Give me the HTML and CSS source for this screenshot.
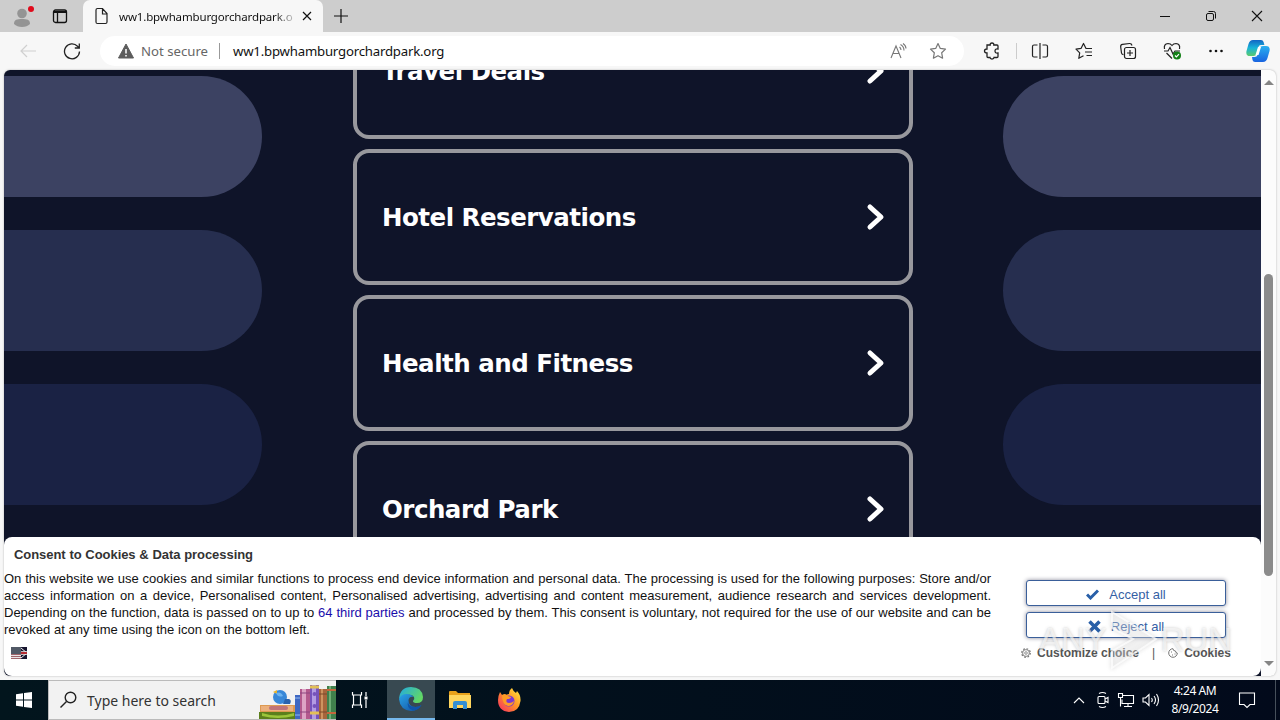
FILE: index.html
```html
<!DOCTYPE html>
<html lang="en">
<head>
    <meta charset="UTF-8">
    <meta name="viewport" content="width=device-width, initial-scale=1.0">
    <title>ww1.bpwhamburgorchardpark.org</title>
    <link rel="stylesheet" href="styles.css">
</head>
<body>
    <div class="tabbar">
        <div class="tab-tools">
            <svg class="profile" width="24" height="24" viewBox="0 0 24 24"><circle cx="12" cy="8.500" r="4.800" fill="#949494"/><path d="M4 19c0-4.500 3-5 8-5s8 .5 8 5q-3 3-8 3t-8-3z" fill="#949494"/><circle cx="21" cy="4" r="3" fill="#e00b1c"/></svg>
            <svg width="16" height="16" viewBox="0 0 16 16" fill="none" stroke="#111" stroke-width="1.3"><rect x="1.500" y="2" width="13" height="12.500" rx="2"/><path d="M2 4h12" stroke-width="2"/><path d="M5.500 5v9"/></svg>
        </div>
        <div class="tab">
            <svg width="14" height="18" viewBox="0 0 14 18" fill="none" stroke="#222" stroke-width="1.2"><path d="M2.500 1.500h5l4.500 5V15q0 1.500-1.500 1.500h-8Q1 16.500 1 15V3q0-1.500 1.500-1.500zM7.500 1.500V7H12"/></svg>
            <span class="tab-title">ww1.bpwhamburgorchardpark.o</span>
            <svg width="10" height="10" viewBox="0 0 10 10" stroke="#111" stroke-width="1.2"><path d="M1 1l8 8M9 1L1 9"/></svg>
        </div>
        <svg class="new-tab" width="16" height="16" viewBox="0 0 16 16" stroke="#111" stroke-width="1.2"><path d="M1 8h14M8 1v14"/></svg>
        <div class="window-buttons">
            <svg width="12" height="12" viewBox="0 0 12 12" stroke="#111"><path d="M1 6.500h10"/></svg>
            <svg width="12" height="12" viewBox="0 0 12 12" fill="none" stroke="#111"><rect x="1.500" y="3.500" width="7" height="7" rx="1.500"/><path d="M3.500 1.500h5q2 0 2 2v5"/></svg>
            <svg width="12" height="12" viewBox="0 0 12 12" stroke="#111" stroke-width="1.100"><path d="M1 1l10 10M11 1L1 11"/></svg>
        </div>
    </div>

    <div class="toolbar">
        <svg class="back" width="18" height="18" viewBox="0 0 18 18" fill="none" stroke="#d0d0d0" stroke-width="1.200"><path d="M17 9H2M8 3L2 9l6 6"/></svg>
        <svg class="reload" width="18" height="18" viewBox="0 0 18 18" fill="none" stroke="#222" stroke-width="1.300"><path d="M16.500 9.500A7.500 7.500 0 1 1 14.500 4.200L16 6M16.300 1.500V6h-4.500"/></svg>
        <div class="address">
            <svg width="16" height="16" viewBox="0 0 16 16"><path d="M8 1l7.500 14H.5z" fill="#5c5c5c" stroke="#5c5c5c" stroke-linejoin="round"/><path d="M8 6v4.500M8 12v1.600" stroke="#fff" stroke-width="1.500"/></svg>
            <span class="not-secure">Not secure</span>
            <span class="address-line"></span>
            <span class="url">ww1.bpwhamburgorchardpark.org</span>
            <svg class="read-aloud" width="17" height="16" viewBox="0 0 17 16" fill="none" stroke="#777" stroke-width="1.100"><path d="M1 15L6 3l5 12M2.800 10.500h6.400M9.500 4q1.500 1.200 1.500 3M10.500 1.500q3.500 2 3.500 6M13 .5q3 2 3 5"/></svg>
            <svg width="18" height="18" viewBox="0 0 18 18" fill="none" stroke="#777" stroke-width="1.200" stroke-linejoin="round"><path d="M9 1.500l2.300 4.900 5.200.7-3.800 3.700.9 5.400L9 13.700l-4.600 2.500.9-5.400L1.500 7.100l5.200-.7z"/></svg>
        </div>
        <div class="tool-icons">
            <svg width="18" height="18" viewBox="0 0 18 18" fill="none" stroke="#222" stroke-width="1.300"><path d="M4 3h3.200q-.2-2 1.800-2t1.800 2H14q1 0 1 1v3q-3-.5-3 2t3 2v3.500q0 1-1 1h-3q0 1.500-2 1.500t-2-1.500H5q-1 0-1-1V11Q1.500 11 1.500 9T4 7z"/></svg>
            <span class="tool-line"></span>
            <svg width="18" height="18" viewBox="0 0 18 18" fill="none" stroke="#222" stroke-width="1.200"><path d="M9 1v16M6.500 3H3Q1.500 3 1.500 4.500v9Q1.500 15 3 15h3.500M11.500 3H15q1.500 0 1.500 1.500v9Q16.500 15 15 15h-3.500"/></svg>
            <svg width="18" height="18" viewBox="0 0 18 18" fill="none" stroke="#222" stroke-width="1.200" stroke-linejoin="round"><path d="M17 6.500h-6L8.500 1.500 6 6.400l-5 .7 3.700 3.700-.9 5.500 4.700-2.500M10 10h7M11.500 13.500H17"/></svg>
            <svg width="18" height="18" viewBox="0 0 18 18" fill="none" stroke="#222" stroke-width="1.200"><rect x="5.500" y="5.500" width="11" height="11" rx="2"/><path d="M11 8v6M8 11h6M13 3.500Q12.500 1.300 10.500 1.500l-7 .9Q1.400 2.700 1.700 5l.8 6q.2 1.500 2 1.700"/></svg>
            <svg width="18" height="18" viewBox="0 0 18 18" fill="none" stroke="#222" stroke-width="1.200"><path d="M1.500 7Q.5 2 5 1.500q2.500 0 4 2 1.500-2 4-2Q17.500 2 16.500 7M3.500 11l5.500 5.500M1 9h4l2-3.500L10 12l2-3h5"/><circle cx="14" cy="13.500" r="4" fill="#138017" stroke="none"/><path d="M12 13.500l1.400 1.400 2.600-2.700" stroke="#fff"/></svg>
            <svg width="18" height="18" viewBox="0 0 18 18" fill="#111"><circle cx="3.500" cy="9" r="1.300"/><circle cx="9" cy="9" r="1.300"/><circle cx="14.500" cy="9" r="1.300"/></svg>
        </div>
        <svg class="copilot" width="24" height="24" viewBox="0 0 24 24">
            <defs>
                <linearGradient id="cpLeft" x1="0" y1="0" x2="0" y2="1"><stop offset="0" stop-color="#1265c4"/><stop offset=".5" stop-color="#18b4d8"/><stop offset="1" stop-color="#5ccb6c"/></linearGradient>
                <linearGradient id="cpRight" x1="0" y1="0" x2="0" y2="1"><stop offset="0" stop-color="#29b0f0"/><stop offset="1" stop-color="#1964e0"/></linearGradient>
            </defs>
            <path d="M7 1h8q2 0 2.600 2l.8 3H15q-2 0-2.600 2l-2 7Q9.800 17 7.500 17H4Q-.5 17 .5 12l2-7Q3.700 1 7 1z" fill="url(#cpLeft)"/>
            <path d="M17 7h3q4.500 0 3.500 5l-2 7q-1.200 4-4.500 4H9q-2 0-2.500-2L6 18h2.500q2.500 0 3-2l2.200-7Q14.300 7 17 7z" fill="url(#cpRight)"/>
            <path d="M12 8h3l-2.500 8H9.500z" fill="#fff"/>
        </svg>
    </div>

    <div class="browser">
        <div class="page">
            <div class="pills pills-left">
                <span class="pill pill-light"></span>
                <span class="pill pill-mid"></span>
                <span class="pill pill-dark"></span>
            </div>
            <div class="cards">
                <a class="card"><span>Travel Deals</span><svg width="20" height="28" viewBox="0 0 20 28"><path d="M4 4l11 10L4 24"/></svg></a>
                <a class="card"><span>Hotel Reservations</span><svg width="20" height="28" viewBox="0 0 20 28"><path d="M4 4l11 10L4 24"/></svg></a>
                <a class="card"><span>Health and Fitness</span><svg width="20" height="28" viewBox="0 0 20 28"><path d="M4 4l11 10L4 24"/></svg></a>
                <a class="card"><span>Orchard Park</span><svg width="20" height="28" viewBox="0 0 20 28"><path d="M4 4l11 10L4 24"/></svg></a>
            </div>
            <div class="pills pills-right">
                <span class="pill pill-light"></span>
                <span class="pill pill-mid"></span>
                <span class="pill pill-dark"></span>
            </div>

            <div class="consent">
                <div class="consent-text">
                    <h2>Consent to Cookies &amp; Data processing</h2>
                    <p>
                        <span class="line">On this website we use cookies and similar functions to process end device information and personal data. The processing is used for the following purposes: Store and/or</span>
                        <span class="line">access information on a device, Personalised content, Personalised advertising, advertising and content measurement, audience research and services development.</span>
                        <span class="line">Depending on the function, data is passed on to up to <a>64 third parties</a> and processed by them. This consent is voluntary, not required for the use of our website and can be</span>
                        <span class="line last">revoked at any time using the icon on the bottom left.</span>
                    </p>
                    <svg class="flag" width="16" height="12" viewBox="0 0 16 12">
                        <rect width="16" height="12" fill="#e9e4e6"/>
                        <path d="M0 7.500h10M0 9.500h10M0 11.500h10" stroke="#a0656b"/>
                        <rect width="10" height="7" fill="#515966"/>
                        <rect x="10" width="6" height="12" fill="#17152f"/>
                        <path d="M10 1l6 5M10 11l6-5" stroke="#eee"/>
                        <path d="M10 6h6" stroke="#eee" stroke-width="3.500"/><path d="M10 6h6" stroke="#b52b32" stroke-width="2"/>
                    </svg>
                </div>
                <div class="consent-actions">
                    <button class="consent-btn"><svg width="13" height="11" viewBox="0 0 13 11" fill="none" stroke="#285fa8" stroke-width="3"><path d="M1 5.500l3.500 3.500L12 1.500"/></svg><span class="accept">Accept all</span></button>
                    <button class="consent-btn"><svg width="13" height="13" viewBox="0 0 13 13" stroke="#285fa8" stroke-width="3.500"><path d="M1.500 1.500l10 10M11.500 1.500l-10 10"/></svg><span class="reject">Reject all</span></button>
                    <div class="consent-links">
                        <svg width="10" height="10" viewBox="0 0 10 10" fill="none" stroke="#777"><circle cx="5" cy="5" r="4.300" stroke-width="1.200" stroke-dasharray="1.700 1.677"/><circle cx="5" cy="5" r="3.400" stroke-width=".9"/><circle cx="5" cy="5" r="1.300" stroke-width=".8"/></svg>
                        <span class="customize">Customize choice</span>
                        <span class="bar">|</span>
                        <svg width="10" height="10" viewBox="0 0 10 10" fill="none" stroke="#777"><path d="M5 .7A4.300 4.300 0 1 0 9.300 5Q7.500 5 7.500 3 5 3 5 .7z"/><path d="M3 4h1M4 7h1M6.500 6h1"/></svg>
                        <span class="cookies">Cookies</span>
                    </div>
                </div>
            </div>
        </div>
        <div class="scrollbar">
            <span class="arrow-up"></span>
            <span class="thumb"></span>
            <span class="arrow-down"></span>
        </div>
    </div>

    <div class="watermark">
        <span>ANY</span>
        <svg width="54" height="64" viewBox="0 0 54 64"><path d="M5 4l44 27L5 60V43l21-12L5 20z"/></svg>
        <span>RUN</span>
    </div>

    <div class="taskbar">
        <div class="start"><svg width="16" height="16" viewBox="0 0 16 16" fill="#fff"><path d="M0 2.300L7 1.300v6.200H0zM8 1.100L16 0v7.500H8zM0 8.500h7v6.200L0 13.700zM8 8.500h8V16l-8-1.100z"/></svg></div>
        <div class="search">
            <svg width="18" height="18" viewBox="0 0 18 18" fill="none" stroke="#222" stroke-width="1.400"><circle cx="10.500" cy="6.500" r="5.300"/><path d="M6.500 10.500L.5 16.500"/></svg>
            <span>Type here to search</span>
            <svg class="books" width="77" height="35" viewBox="0 0 77 35">
                <path d="M1 21h35v7H1z" fill="#dd9a52"/><path d="M2 22h32v5H2z" fill="#ecb07c"/><rect x="10" y="22" width="19" height="4" rx="2" fill="#c07478"/>
                <path d="M0 28h38v7H0z" fill="#5b7f1c"/><path d="M3 29q16 5 32 0v3q-16 4-32 0z" fill="#9bc53a"/>
                <circle cx="21" cy="13" r="7" fill="#3888d8"/><path d="M26 15h4q3 1 1 5h-7z" fill="#2a64ae"/><path d="M14 8l4-2v4z" fill="#e9b52d"/><path d="M17 9q5-2 7 3-5 2-7-3z" fill="#6db3ef"/>
                <rect x="36" y="11" width="5" height="24" fill="#3f68c2"/><path d="M36 14h5M36 31h5" stroke="#93b9ed"/>
                <rect x="41" y="5" width="10" height="30" fill="#b3598d"/><path d="M45 5v30" stroke="#dda4c5" stroke-width="4"/><path d="M41 9h10M41 28h10" stroke="#8d4780"/>
                <rect x="51" y="1" width="9" height="34" fill="#7653bb"/><path d="M55 1v34" stroke="#b39be3" stroke-width="4"/><path d="M51 3h9M51 29h9" stroke="#e2c056" stroke-width="3"/><circle cx="55.500" cy="10" r="2" fill="#7653bb"/><circle cx="55.500" cy="22" r="2" fill="#7653bb"/>
                <rect x="60" y="5" width="8" height="30" fill="#a6653c"/><path d="M63 5v30" stroke="#ce9460" stroke-width="2"/><path d="M60 10h8M60 28h8" stroke="#7b4a2a"/>
                <rect x="68" y="2" width="9" height="33" fill="#40804c"/><path d="M71 2v33" stroke="#6fad76" stroke-width="2"/><path d="M68 6h9M68 29h9" stroke="#c4673d" stroke-width="2"/>
            </svg>
        </div>
        <div class="task task-view"><svg width="18" height="18" viewBox="0 0 18 18" fill="none" stroke="#fff" stroke-width="1.200"><path d="M1.500 1v3h9V1M1.500 17v-3h9v3M2.500 4v10M9.500 4v10M15 1v4M15 9v8"/><rect x="13.500" y="5.500" width="3" height="3" fill="#fff" stroke="none"/></svg></div>
        <div class="task active">
            <svg width="24" height="24" viewBox="0 0 24 24">
                <defs>
                    <linearGradient id="edgeTop" x1="0" y1="0" x2="1" y2=".5"><stop offset="0" stop-color="#20a9e5"/><stop offset="1" stop-color="#62d865"/></linearGradient>
                    <linearGradient id="edgeLow" x1="0" y1="0" x2="1" y2="1"><stop offset="0" stop-color="#29a4e8"/><stop offset="1" stop-color="#124c9c"/></linearGradient>
                </defs>
                <path d="M0 12Q1 0 12 0q11 0 12 10 0 6-6 6-4 0-4-2 2-2 1-4-2-3-7-2-5 0-8 4z" fill="url(#edgeTop)"/>
                <path d="M0 12Q2 7 7.500 7q5 0 7 3-4-1-5 3 0 7 7 7 3 0 6-2-4 6-10.500 6Q1 23 0 12z" fill="url(#edgeLow)"/>
                <path d="M9.500 13q-2 7 7 7 3 0 6-2-3 5-8 5.500-8-2-5-10.500z" fill="#0f55aa"/>
            </svg>
        </div>
        <div class="task"><svg width="22" height="20" viewBox="0 0 22 20"><path d="M0 2Q0 1 1 1h6l2 2h12v3H0z" fill="#e9a21b"/><path d="M0 5h22v13H0z" fill="#ffd65e"/><path d="M4 19v-6q0-2 2-2h10q2 0 2 2v6h-4v-4H8v4z" fill="#338fd4"/></svg></div>
        <div class="task"><svg width="24" height="24" viewBox="0 0 24 24">
            <defs><linearGradient id="ffBody" x1="1" y1="0" x2="0" y2="1"><stop offset="0" stop-color="#fff044"/><stop offset=".45" stop-color="#ff9825"/><stop offset="1" stop-color="#f52667"/></linearGradient></defs>
            <path d="M3 4l2 3 3-1 1 1q2-1 3-1 0-4 3-6 1 3 4 5l1-2q4 4 3.500 10Q22 24 12 24 1 23 1 12q0-4 2-8z" fill="url(#ffBody)"/>
            <circle cx="12" cy="13" r="5.500" fill="#7a38d2"/><path d="M5 7q4-2 6 1l3 1q0 2-4 2-2 4 2 4 3 0 5-2-1 5-6 5-6-1-6-11z" fill="#ff9b24"/></svg></div>
        <div class="tray">
            <svg class="caret" width="12" height="8" viewBox="0 0 12 8"><path d="M1 7l5-5 5 5"/></svg>
            <svg width="14" height="18" viewBox="0 0 14 18"><rect x="2" y="5.500" width="7" height="7" rx="1"/><path d="M9 8l3-1.500v5L9 10M3 2.500q3.500-2 7 0M3 15.500q3.500 2 7 0"/></svg>
            <svg width="18" height="16" viewBox="0 0 18 16"><path d="M6 3.500h10.500v8H5v-4M11 11.500v3M7 14.500h8M1.500 1.500h4v4h-4zM3.500 5.500v9"/></svg>
            <svg width="18" height="14" viewBox="0 0 18 14"><path d="M1 5h2.500L7 1.500v11L3.500 9H1zM9.500 5q1.500 2 0 4M12 3q3 4 0 8M14.500 1q4 6 0 12"/></svg>
            <div class="clock"><span>4:24 AM</span><span>8/9/2024</span></div>
            <svg width="18" height="18" viewBox="0 0 18 18"><path d="M1.500 2h15v11.500H12L9 16.500l-3-3H1.500z"/></svg>
        </div>
        <span class="show-desktop"></span>
    </div>
</body>
</html>
```

FILE: styles.css
```css
* {
    box-sizing: border-box;
}
body {
    display: flex;
    flex-direction: column;
    width: 1280px;
    height: 720px;
    margin: 0;
    overflow: hidden;
    background-color: #f7f7f7;
    font-family: "Liberation Sans", Arial, sans-serif;
    white-space: nowrap;
}
svg {
    display: block;
    flex: none;
}
.tabbar {
    display: flex;
    align-items: center;
    height: 32px;
    background-color: #cdcdcd;
}
.tab-tools {
    display: flex;
    align-items: center;
    gap: 18px;
    width: 83px;
    height: 32px;
    padding-left: 10px;
}
.profile {
    margin-top: 1px;
}
.tab {
    display: flex;
    align-items: center;
    width: 240px;
    height: 32px;
    padding-left: 12px;
    border-radius: 7px 7px 0 0;
    background-color: #f7f7f7;
}
.tab-title {
    width: 174px;
    margin: 0 9px 0 10px;
    overflow: hidden;
    font-family: "Noto Sans", sans-serif;
    font-size: 11.5px;
    letter-spacing: -0.15px;
    color: #111;
    -webkit-mask-image: linear-gradient(to right, #000 155px, transparent 180px);
    mask-image: linear-gradient(to right, #000 155px, transparent 180px);
}
.new-tab {
    margin-left: 10px;
}
.window-buttons {
    display: flex;
    gap: 34px;
    margin-left: auto;
    padding-right: 17px;
}
.toolbar {
    display: flex;
    align-items: center;
    height: 38px;
    padding-left: 19px;
}
.reload {
    margin-left: 26px;
}
.address {
    display: flex;
    align-items: center;
    width: 864px;
    height: 30px;
    margin-left: 19px;
    padding: 0 17px 0 18px;
    border-radius: 15px;
    background-color: #fff;
    font-family: "Noto Sans", sans-serif;
    font-size: 13.2px;
}
.not-secure {
    width: 68px;
    margin-left: 7px;
    color: #666;
}
.address-line {
    width: 1px;
    height: 16px;
    margin: 0 13px 0 10px;
    background-color: #999;
}
.url {
    color: #111;
    letter-spacing: -0.2px;
}
.read-aloud {
    margin-left: auto;
    margin-right: 22px;
}
.tool-icons {
    display: flex;
    align-items: center;
    gap: 26px;
    margin-left: 19px;
}
.tool-line {
    width: 1px;
    height: 16px;
    margin: 0 -12px 0 -11px;
    background-color: #ccc;
}
.copilot {
    margin-left: 21px;
}
.browser {
    display: flex;
    width: 1272px;
    height: 606px;
    margin-left: 4px;
    border-radius: 6px;
    overflow: hidden;
    background-color: #fcfcfc;
    box-shadow: 0 0 2px #aaa;
}
.page {
    position: relative;
    display: flex;
    width: 1257px;
    overflow: hidden;
    background-color: #0f1429;
}
.pills {
    display: flex;
    flex-direction: column;
    gap: 33px;
    width: 258px;
    padding-top: 6px;
}
.pills-right {
    margin-left: auto;
}
.pill {
    height: 121px;
}
.pills-left .pill {
    border-radius: 0 61px 61px 0;
}
.pills-right .pill {
    border-radius: 61px 0 0 61px;
}
.pill-light {
    background-color: #3c4262;
}
.pill-mid {
    background-color: #262e4f;
}
.pill-dark {
    background-color: #1a2244;
}
.cards {
    display: flex;
    flex-direction: column;
    gap: 10px;
    width: 560px;
    margin: -67px 0 0 91px;
}
.card {
    display: flex;
    flex: none;
    align-items: center;
    justify-content: space-between;
    height: 136px;
    padding: 0 23px 0 25px;
    border: 4px solid #98989d;
    border-radius: 16px;
    color: #fff;
    font-family: "DejaVu Sans", sans-serif;
    font-size: 24.5px;
    font-weight: bold;
    letter-spacing: -0.5px;
}
.card path {
    fill: none;
    stroke: #fff;
    stroke-width: 5;
    stroke-linecap: round;
    stroke-linejoin: round;
}
.consent {
    position: absolute;
    left: 0;
    bottom: 0;
    display: flex;
    width: 1257px;
    height: 139px;
    border-radius: 8px;
    background-color: #fff;
}
.consent-text {
    width: 987px;
}
.consent h2 {
    width: 239px;
    margin: 10px 0 8px 10px;
    color: #333;
    font-size: 13px;
    letter-spacing: -0.05px;
    line-height: 15px;
    text-align-last: justify;
}
.consent p {
    margin: 0;
    color: #111;
    font-size: 13px;
    line-height: 17px;
}
.line {
    display: block;
    text-align-last: justify;
}
.last {
    width: 306px;
}
.consent p a {
    color: #1a0dab;
}
.flag {
    margin: 9px 0 0 7px;
}
.consent-actions {
    display: flex;
    flex-direction: column;
    margin: 43px 0 0 35px;
}
.consent-btn {
    display: flex;
    align-items: center;
    justify-content: center;
    gap: 10px;
    width: 200px;
    height: 26px;
    margin-bottom: 6px;
    padding: 2px 0 0;
    border: 1px solid #3a5f9a;
    border-radius: 3px;
    background-color: #fff;
    box-shadow: 0 0 4px #889;
    color: #355fa5;
    font-family: inherit;
    font-size: 13px;
}
.consent-links {
    display: flex;
    align-items: center;
    gap: 6px;
    margin: 2px 0 0 -5px;
    color: #555;
    font-size: 12px;
    font-weight: bold;
}
.bar {
    margin: 0 7px;
    font-weight: normal;
}
.scrollbar {
    display: flex;
    flex-direction: column;
    align-items: center;
    width: 15px;
    padding-top: 10px;
}
.arrow-up,
.arrow-down {
    border: 5px solid transparent;
    border-top: 0;
    border-bottom: 5px solid #858585;
}
.arrow-down {
    margin-top: 85px;
    border-bottom: 0;
    border-top: 5px solid #858585;
}
.thumb {
    width: 9px;
    height: 302px;
    margin-top: 189px;
    border-radius: 5px;
    background-color: #8b8b8b;
}
.watermark {
    position: absolute;
    left: 1039px;
    top: 608px;
    display: flex;
    align-items: center;
    justify-content: space-between;
    width: 193px;
    height: 64px;
    color: rgba(255, 255, 255, 0.6);
    font-size: 33px;
    text-shadow: 0 0 3px rgba(100, 100, 100, 0.35);
}
.watermark path {
    fill: rgba(245, 245, 245, 0.3);
    stroke: rgba(255, 255, 255, 0.7);
    stroke-width: 2;
}
.watermark svg {
    margin: 0 -6px;
    filter: drop-shadow(0 0 2px rgba(100, 100, 100, 0.35));
}
.taskbar {
    display: flex;
    height: 40px;
    margin-top: 4px;
    background: linear-gradient(to right, #02151d, #020a1b);
}
.start {
    display: flex;
    align-items: center;
    justify-content: center;
    width: 48px;
}
.search {
    display: flex;
    align-items: center;
    width: 288px;
    padding-left: 11px;
    border: 1px solid #bbb;
    border-right: 0;
    background-color: #f2f2f2;
    color: #333;
    font-family: "Noto Sans", sans-serif;
    font-size: 14px;
}
.search span {
    margin-left: 9px;
}
.books {
    align-self: flex-end;
    margin-left: auto;
}
.task {
    display: flex;
    align-items: center;
    justify-content: center;
    width: 49px;
}
.task-view {
    width: 51px;
    padding-right: 3px;
}
.active {
    width: 48px;
    border-bottom: 2px solid #76b9ed;
    background-color: #384951;
}
.tray {
    display: flex;
    align-items: center;
    gap: 7px;
    margin-left: auto;
    padding-right: 19px;
}
.tray path,
.tray rect {
    fill: none;
    stroke: #fff;
    stroke-width: 1.1;
}
.caret {
    margin-right: 4px;
}
.clock {
    display: flex;
    flex-direction: column;
    align-items: center;
    width: 54px;
    margin: 0 9px 0 1px;
    color: #fff;
    font-family: "Noto Sans", sans-serif;
    font-size: 12px;
    letter-spacing: -0.4px;
    line-height: 18px;
}
.show-desktop {
    width: 5px;
    border-left: 1px solid #46505b;
}
```
